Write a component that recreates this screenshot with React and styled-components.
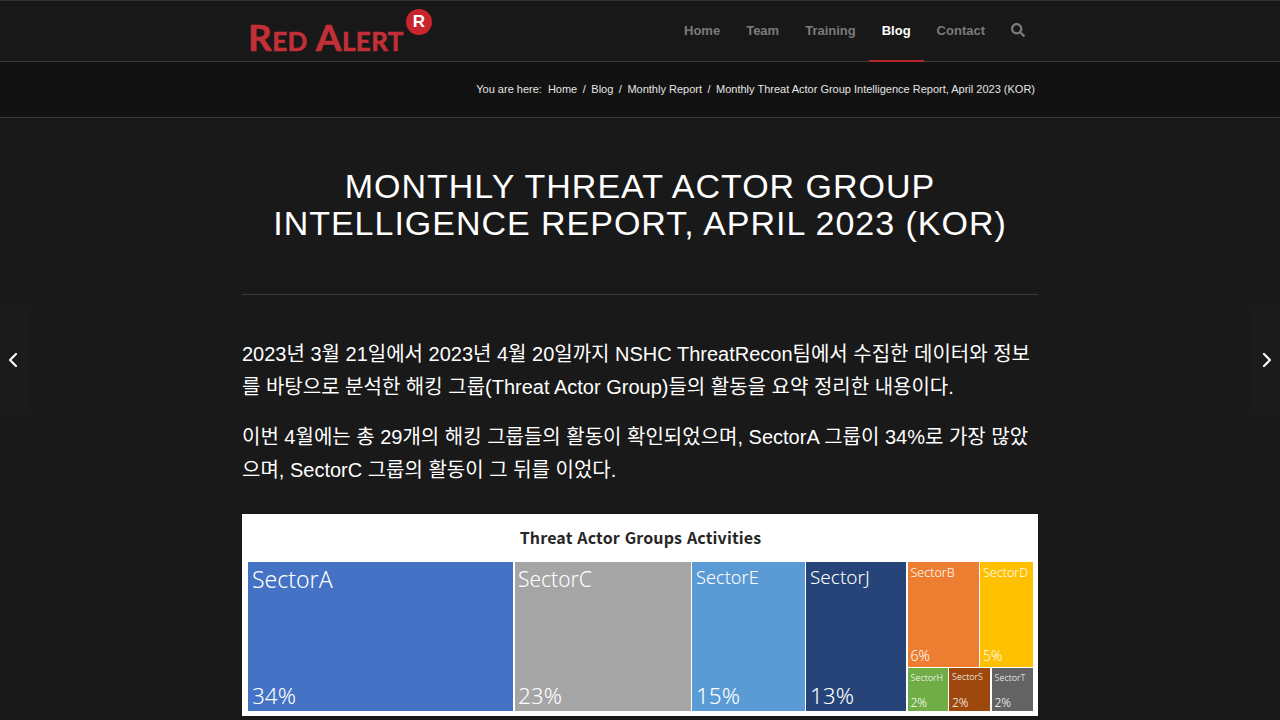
import React from "react";
import styled, { createGlobalStyle } from "styled-components";
import { ChevronLeft, ChevronRight } from "lucide-react";
import { FaSearch } from "react-icons/fa";

const Global = createGlobalStyle`
  html, body { margin: 0; padding: 0; background: #191919; overflow: hidden; }
  body { font-family: "Liberation Sans", "Noto Sans CJK KR", Arial, sans-serif; color: #fff; }
  * { box-sizing: border-box; }
`;

const Page = styled.div`
  position: relative;
  min-height: 720px;
  height: 720px;
  overflow: hidden;
  background: #191919;
`;

const Container = styled.div`
  width: 796px;
  margin: 0 auto;
`;

const Header = styled.header`
  height: 62px;
  background: #181818;
  border-top: 1px solid #333;
  border-bottom: 1px solid #3a3a3a;
`;

const HeaderInner = styled(Container)`
  height: 60px;
  display: flex;
  justify-content: space-between;
`;

const Logo = styled.a`
  display: flex;
  align-items: flex-start;
  margin-left: 6px;
  color: #c22f37;
`;

const LogoText = styled.span`
  font-family: "Lato", "Liberation Sans", sans-serif;
  font-weight: 700;
  font-size: 37px;
  line-height: 36px;
  margin-top: 18px;
  font-variant: small-caps;
  white-space: nowrap;
  letter-spacing: 0.4px;
  -webkit-text-stroke: 0.6px #c22f37;
`;

const LogoBadge = styled.span`
  width: 26px;
  height: 26px;
  margin: 8px 0 0 2px;
  border-radius: 50%;
  background: #c9252f;
  color: #fff;
  font: 700 17px/26px "Liberation Sans", sans-serif;
  text-align: center;
`;

const Nav = styled.nav`
  display: flex;
`;

const NavItem = styled.a`
  height: 61px;
  margin-bottom: -1px;
  padding: 22px 13px 0;
  font-size: 13px;
  font-weight: 700;
  line-height: 16px;
  color: ${(p) => (p.$active ? "#fff" : "#7b7b7b")};
  border-bottom: 2px solid ${(p) => (p.$active ? "#b5262e" : "transparent")};
`;

const SearchButton = styled.a`
  display: flex;
  padding: 22px 13px 0 13px;
  color: #7b7b7b;
`;

const Crumbs = styled.div`
  height: 56px;
  background: #121212;
  border-bottom: 1px solid #3a3a3a;
`;

const CrumbRow = styled(Container)`
  height: 53px;
  display: flex;
  justify-content: flex-end;
  align-items: center;
  padding: 0 3px 0 0;
  font-size: 11px;
  color: #e4e4e4;
  white-space: pre;
`;

const CrumbSep = styled.span`
  margin: 0 5.5px;
`;

const CrumbLead = styled.span`
  margin-right: 6px;
`;

const Main = styled(Container)``;

const Title = styled.h1`
  margin: 0;
  padding: 50px 0 52px;
  border-bottom: 1px solid #3a3a3a;
  text-align: center;
  font-size: 34px;
  line-height: 37px;
  font-weight: 400;
  letter-spacing: 0.98px;
  text-transform: uppercase;
  color: #fff;
`;

const Body = styled.div`
  padding-top: 43px;
`;

const Para = styled.p`
  margin: 0 0 17px;
  font-size: 20px;
  line-height: 33px;
  color: #fff;
`;

const Chart = styled.figure`
  margin: 27px 0 0;
  height: 202px;
  background: #fff;
  padding: 0 5px 5px 6px;
  display: flex;
  flex-direction: column;
`;

const ChartTitle = styled.figcaption`
  height: 48px;
  text-align: center;
  font: 700 16px/47px "Noto Sans CJK KR", "Noto Sans", sans-serif;
  color: #262626;
  letter-spacing: 0.14px;
  word-spacing: 1px;
`;

const Treemap = styled.div`
  flex: 1;
  min-height: 0;
  display: flex;
  gap: 1.5px;
`;

const Tile = styled.div`
  width: ${(p) => p.$w}px;
  flex: none;
  background: ${(p) => p.$bg};
  padding: ${(p) => p.$pad};
  display: flex;
  flex-direction: column;
  justify-content: space-between;
  font-family: "Noto Sans", "Open Sans", sans-serif;
  font-weight: 300;
  color: #fff;
  white-space: nowrap;
`;

const TileName = styled.span`
  font-size: ${(p) => p.$size}px;
  line-height: 1.2;
`;

const TilePct = styled.span`
  font-size: ${(p) => p.$size}px;
  line-height: 1.15;
`;

const SmallColumn = styled.div`
  width: 125.5px;
  display: flex;
  flex-direction: column;
  gap: 1.5px;
`;

const SmallRow = styled.div`
  display: flex;
  gap: 1.5px;
  height: ${(p) => p.$h}px;
  flex: ${(p) => (p.$grow ? "1" : "none")};
  min-height: 0;
`;

const SideArrow = styled.a`
  position: absolute;
  top: 305px;
  ${(p) => (p.$right ? "right: 0;" : "left: 0;")}
  width: 30px;
  height: 110px;
  background: #1b1b1b;
  color: #fff;
  display: flex;
  align-items: center;
  justify-content: ${(p) => (p.$right ? "flex-end" : "flex-start")};
  padding: 0 1px;
`;

const tiles = [
  { n: "SectorA", p: "34%", w: 265, bg: "#4472c4", ns: 23, ps: 22.5, pad: "4px 3px 2px 4px" },
  { n: "SectorC", p: "23%", w: 176, bg: "#a5a5a5", ns: 21, ps: 22.5, pad: "5px 3px 2px 3.5px" },
  { n: "SectorE", p: "15%", w: 112.5, bg: "#5b9bd5", ns: 18.2, ps: 22.5, pad: "5px 3px 2px 4px" },
  { n: "SectorJ", p: "13%", w: 100, bg: "#264478", ns: 19, ps: 22.5, pad: "4px 3px 2px 4px" },
];

const smallTop = [
  { n: "SectorB", p: "6%", w: 71, bg: "#ed7d31", ns: 12.5, ps: 14, pad: "3px 2px 2px 3px" },
  { n: "SectorD", p: "5%", w: 53, bg: "#ffc000", ns: 12.5, ps: 14, pad: "3px 2px 2px 3px" },
];

const smallBottom = [
  { n: "SectorH", p: "2%", w: 40, bg: "#70ad47", ns: 9, pad: "5px 2px 1px 3px" },
  { n: "SectorS", p: "2%", w: 41, bg: "#9e480e", ns: 9, pad: "4px 2px 1px 3px" },
  { n: "SectorT", p: "2%", w: 41, bg: "#636363", ns: 9, pad: "5px 2px 1px 3px" },
];

function TreeTile({ t }) {
  return (
    <Tile $w={t.w} $bg={t.bg} $pad={t.pad}>
      <TileName $size={t.ns}>{t.n}</TileName>
      <TilePct $size={t.ps || 12}>{t.p}</TilePct>
    </Tile>
  );
}

export default function App() {
  return (
    <Page>
      <Global />
      <Header>
        <HeaderInner>
          <Logo>
            <LogoText>Red Alert</LogoText>
            <LogoBadge>R</LogoBadge>
          </Logo>
          <Nav>
            <NavItem>Home</NavItem>
            <NavItem>Team</NavItem>
            <NavItem>Training</NavItem>
            <NavItem $active>Blog</NavItem>
            <NavItem>Contact</NavItem>
            <SearchButton>
              <FaSearch size={14} />
            </SearchButton>
          </Nav>
        </HeaderInner>
      </Header>
      <Crumbs>
        <CrumbRow>
          <CrumbLead>You are here:</CrumbLead>
          <span>Home</span>
          <CrumbSep>/</CrumbSep>
          <span>Blog</span>
          <CrumbSep>/</CrumbSep>
          <span>Monthly Report</span>
          <CrumbSep>/</CrumbSep>
          <span>Monthly Threat Actor Group Intelligence Report, April 2023 (KOR)</span>
        </CrumbRow>
      </Crumbs>
      <Main>
        <Title>
          Monthly Threat Actor Group
          <br />
          Intelligence Report, April 2023 (KOR)
        </Title>
        <Body>
          <Para>
            2023년 3월 21일에서 2023년 4월 20일까지 NSHC ThreatRecon팀에서 수집한 데이터와 정보를 바탕으로 분석한 해킹 그룹(Threat Actor Group)들의 활동을 요약 정리한 내용이다.
          </Para>
          <Para>
            이번 4월에는 총 29개의 해킹 그룹들의 활동이 확인되었으며, SectorA 그룹이 34%로 가장 많았으며, SectorC 그룹의 활동이 그 뒤를 이었다.
          </Para>
          <Chart>
            <ChartTitle>Threat Actor Groups Activities</ChartTitle>
            <Treemap>
              {tiles.map((t) => (
                <TreeTile key={t.n} t={t} />
              ))}
              <SmallColumn>
                <SmallRow $grow>
                  {smallTop.map((t) => (
                    <TreeTile key={t.n} t={t} />
                  ))}
                </SmallRow>
                <SmallRow $h={43}>
                  {smallBottom.map((t) => (
                    <TreeTile key={t.n} t={t} />
                  ))}
                </SmallRow>
              </SmallColumn>
            </Treemap>
          </Chart>
        </Body>
      </Main>
      <SideArrow>
        <ChevronLeft size={24} strokeWidth={2.2} />
      </SideArrow>
      <SideArrow $right>
        <ChevronRight size={24} strokeWidth={2.2} />
      </SideArrow>
    </Page>
  );
}
